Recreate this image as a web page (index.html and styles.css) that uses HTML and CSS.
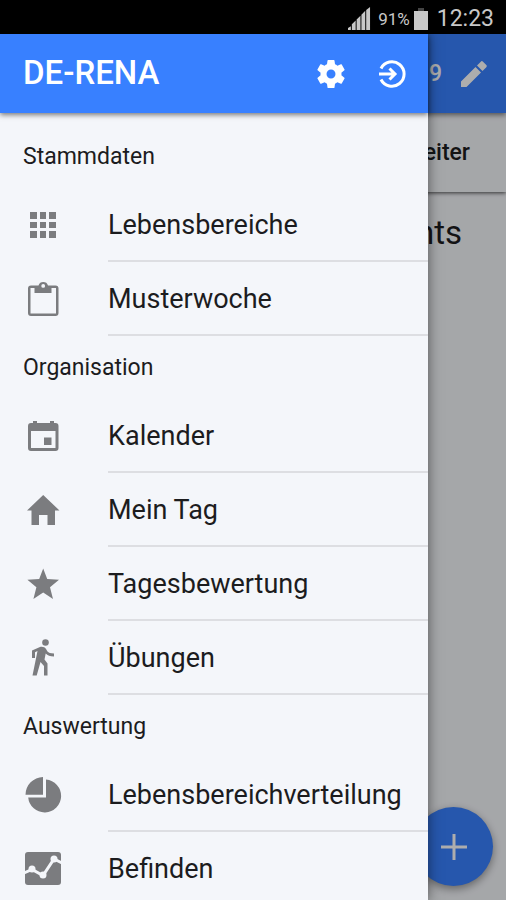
FILE: index.html
```
<!DOCTYPE html>
<html lang="de">
<head>
<meta charset="utf-8">
<meta name="viewport" content="width=device-width, initial-scale=1">
<title>DE-RENA</title>
<link rel="stylesheet" href="styles.css">
</head>
<body>
<div class="statusbar">
  <svg class="signal" viewBox="0 0 24 24" aria-hidden="true"><path d="M0 24v-2l3-2v4zM4 24v-6l4-4v10zM9 24V13l4-4v15zM14 24V8l4-4v20zM19 24V3l4-3v24z"/></svg>
  <span class="percent">91%</span>
  <svg class="battery" viewBox="0 0 14 22" aria-hidden="true"><path class="cap" d="M4 0h6v3H4z"/><path d="M0 3h14v19H0z"/></svg>
  <span class="clock">12:23</span>
</div>
<div class="app">
  <main class="page">
    <header class="toolbar page-toolbar">
      <span class="page-date">2019</span>
      <button class="icon-button" aria-label="Bearbeiten"><svg viewBox="0 0 28 28"><path d="M1 21.500V27h5.500L21 12.500 15.500 7zM26.300 7.200a1.500 1.500 0 0 0 0-2.200L23 1.700a1.500 1.500 0 0 0-2.200 0L17 5.500 22.500 11z"/></svg></button>
    </header>
    <div class="pager"><button class="pager-button">Weiter</button></div>
    <h2 class="empty">No events</h2>
    <button class="fab" aria-label="Hinzufügen"><svg viewBox="0 0 26 26"><path d="M11.500 0h3v11.500H26v3H14.500V26h-3V14.500H0v-3h11.500z"/></svg></button>
  </main>
  <div class="backdrop"></div>
  <aside class="drawer">
    <header class="toolbar">
      <h1 class="title">DE-RENA</h1>
      <button class="icon-button" aria-label="Einstellungen"><svg viewBox="2 2 20 20"><path d="M19.430 12.980c.04-.32.07-.64.07-.98s-.03-.66-.07-.98l2.110-1.650c.19-.15.24-.42.12-.64l-2-3.460c-.12-.22-.39-.3-.61-.22l-2.490 1c-.52-.4-1.080-.73-1.690-.98l-.38-2.650C14.460 2.180 14.250 2 14 2h-4c-.25 0-.46.180-.49.42l-.38 2.650c-.61.25-1.170.59-1.690.98l-2.490-1c-.23-.09-.49 0-.61.22l-2 3.460c-.13.22-.07.49.12.64l2.110 1.650c-.04.32-.07.65-.07.98s.03.66.07.98l-2.110 1.650c-.19.15-.24.42-.12.64l2 3.460c.12.22.39.3.61.22l2.490-1c.52.4 1.080.73 1.690.98l.38 2.650c.03.24.24.42.49.42h4c.25 0 .46-.18.49-.42l.38-2.650c.61-.25 1.170-.59 1.690-.98l2.490 1c.23.09.49 0 .61-.22l2-3.460c.12-.22.07-.49-.12-.64zM12 15.200a3.200 3.200 0 1 1 0-6.400 3.200 3.200 0 0 1 0 6.400z"/></svg></button>
      <button class="icon-button" aria-label="Abmelden"><svg class="line" viewBox="0 0 28 28"><path d="M3 8.500a12.200 12.200 0 1 1 0 11M1 14h15M11.500 8.500 17 14l-5.500 5.500"/></svg></button>
    </header>
    <nav class="menu">
      <h2 class="section">Stammdaten</h2>
      <a class="item" href="#"><svg viewBox="0 0 40 40"><path d="M7 7h7v7H7zM17 7h6v7h-6zM26 7h7v7h-7zM7 17h7v6H7zM17 17h6v6h-6zM26 17h7v6h-7zM7 26h7v7H7zM17 26h6v7h-6zM26 26h7v7h-7z"/></svg><span class="label">Lebensbereiche</span></a>
      <a class="item" href="#"><svg viewBox="0 0 40 40"><path fill-rule="evenodd" d="M8 6.500h7.500a5 5 0 0 1 9.500 0h7.500a3 3 0 0 1 3 3V34a3 3 0 0 1-3 3H8a3 3 0 0 1-3-3V9.500a3 3 0 0 1 3-3zM7.500 9v25.500H33V9h-4.500v5h-17V9zM20.200 5a1.900 1.900 0 1 0 0 3.800 1.900 1.900 0 0 0 0-3.800z"/></svg><span class="label">Musterwoche</span></a>
      <h2 class="section">Organisation</h2>
      <a class="item" href="#"><svg viewBox="0 0 40 40"><path fill-rule="evenodd" d="M10 5h4v2h13V5h4v2h1.500a3 3 0 0 1 3 3v22a3 3 0 0 1-3 3H8a3 3 0 0 1-3-3V10a3 3 0 0 1 3-3h2zM8 15v17h24.500V15zM21 21.500h7.500V29H21z"/></svg><span class="label">Kalender</span></a>
      <a class="item" href="#"><svg viewBox="0 0 40 40"><path d="M20.200 5 4 20.500h4.500V35H16V25h8.500v10H32V20.500h4.500z"/></svg><span class="label">Mein Tag</span></a>
      <a class="item" href="#"><svg viewBox="0 0 40 40"><path d="m20.200 4.500 4 10.500 11.800.7-9 7.600 3 11.700-9.800-6.500-9.800 6.500 3-11.700-9-7.600 11.800-.7z"/></svg><span class="label">Tagesbewertung</span></a>
      <a class="item" href="#"><svg viewBox="0 0 40 40"><circle cx="22.500" cy="4.500" r="3.300"/><path d="M17 9c2-.8 5 0 6 2l1.500 2.500c1 1.300 3 2 6.500 2v3c-4 0-6.500-1-8.300-3L21.500 21.500l3 4V37.500H21V28l-3.500-4-3.800 13.500H9.500l5-24.500-2.500 1.200V20H9v-7.500z"/></svg><span class="label">Übungen</span></a>
      <h2 class="section">Auswertung</h2>
      <a class="item" href="#"><svg viewBox="0 0 40 40"><path d="M20 2v17.800H2.500A17.800 17.800 0 0 1 20 2zM23 4.500A16.500 16.500 0 1 1 5.200 22.500H23z"/></svg><span class="label">Lebensbereichverteilung</span></a>
      <a class="item" href="#"><svg viewBox="0 0 40 40"><rect x="2" y="3" width="36" height="33" rx="3"/><path class="trend" d="m1 24 8-3.500 11 6L31 10l8 4"/><g class="dots"><circle cx="9" cy="20" r="3.500"/><circle cx="20" cy="26" r="3.500"/><circle cx="31" cy="10" r="3.500"/></g></svg><span class="label">Befinden</span></a>
    </nav>
  </aside>
</div>
</body>
</html>
```
FILE: styles.css
```
* { box-sizing: border-box; }

body {
  margin: 0;
  height: 100vh;
  display: flex;
  flex-direction: column;
  overflow: hidden;
  background: #f4f6fa;
  color: #1c1c1e;
  font-family: Roboto, "Liberation Sans", sans-serif;
}

h1, h2 { margin: 0; font-weight: 400; }

button {
  border: 0;
  padding: 0;
  background: none;
  color: inherit;
  font: inherit;
}

svg { display: block; flex: none; fill: currentColor; }

.statusbar {
  display: flex;
  flex: none;
  align-items: center;
  justify-content: flex-end;
  height: 34px;
  padding: 3px 12px 0 0;
  background: #000;
  color: #c8c8c8;
}
.signal { width: 23px; height: 23px; }
.percent { margin-left: 7px; font-size: 17px; }
.battery { width: 14px; height: 22px; margin-left: 4px; }
.battery .cap { fill: #444; }
.clock { margin-left: 9px; font-size: 23px; }

.app { position: relative; flex: 1; min-height: 0; overflow: hidden; }
.page { height: 100%; text-align: right; }

.toolbar {
  position: relative;
  display: flex;
  align-items: center;
  height: 79px;
  padding: 0 22px 0 23px;
  gap: 33px;
  background: #3880ff;
  color: #fff;
  box-shadow: 0 2px 5px rgba(0, 0, 0, .5);
}
.page-toolbar { justify-content: flex-end; padding-right: 18px; gap: 18px; }
.page-date { font-size: 23px; font-weight: 500; }
.title { flex: 1; font-size: 33px; font-weight: 500; line-height: 40px; padding-bottom: 2px; }
.icon-button svg { width: 28px; height: 28px; }
.line { fill: none; stroke: currentColor; stroke-width: 3; }

.pager {
  display: flex;
  align-items: center;
  justify-content: flex-end;
  height: 79px;
  padding-right: 36px;
  box-shadow: 0 1px 4px rgba(0, 0, 0, .7);
}
.pager-button { font-size: 23px; font-weight: 500; }
.empty { padding: 21px 44px 0 0; font-size: 33px; line-height: 40px; }

.fab {
  position: absolute;
  right: 13px;
  bottom: 14px;
  display: flex;
  align-items: center;
  justify-content: center;
  width: 79px;
  height: 79px;
  border-radius: 50%;
  background: #3880ff;
  color: #fff;
  box-shadow: 0 3px 8px rgba(0, 0, 0, .4);
}
.fab svg { width: 26px; height: 26px; }

.backdrop { position: absolute; inset: 0; background: rgba(0, 0, 0, .32); }

.drawer {
  position: absolute;
  top: 0;
  bottom: 0;
  left: 0;
  right: 78px;
  background: #f4f6fa;
  box-shadow: 0 0 12px rgba(0, 0, 0, .5);
}

.menu { padding-top: 12px; }
.section { padding-left: 23px; font-size: 23px; line-height: 63px; }
.item {
  display: flex;
  align-items: center;
  gap: 45px;
  height: 74px;
  padding-left: 23px;
  color: #1c1c1e;
  text-decoration: none;
}
.item svg { width: 40px; height: 40px; color: #7b7c7f; }
.label {
  flex: 1;
  height: 74px;
  border-bottom: 2px solid #dddee2;
  font-size: 27px;
  line-height: 74px;
  white-space: nowrap;
}
.trend { fill: none; stroke: #f4f6fa; stroke-width: 3; }
.dots { fill: #f4f6fa; }
```
